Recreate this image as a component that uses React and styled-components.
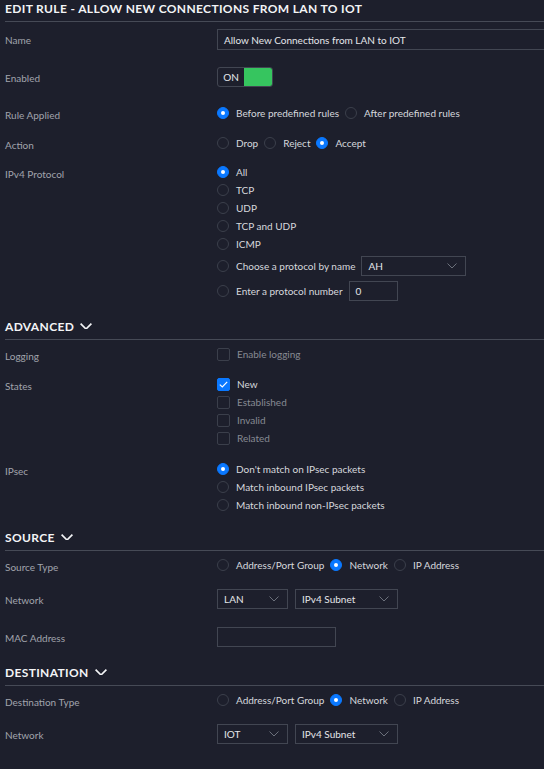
import React from 'react';
import styled, { createGlobalStyle } from 'styled-components';

const GlobalStyle = createGlobalStyle`
  html, body {
    margin: 0;
    padding: 0;
    background: #1d1f2c;
    overflow: hidden;
  }
  body {
    font-family: Lato, 'Noto Sans', sans-serif;
    -webkit-font-smoothing: antialiased;
  }
`;

const Page = styled.div`
  width: 539px;
  padding-left: 5px;
  padding-bottom: 30px;
`;

const Heading = styled.div`
  display: flex;
  align-items: center;
  gap: 6px;
  margin-top: ${p => p.$top || 0}px;
  height: 16px;
  padding-bottom: 5px;
  border-bottom: 1px solid #464a56;
  color: #f3f4f6;
  font-size: 12px;
  font-weight: 700;
  letter-spacing: 0.35px;
  text-transform: uppercase;
  white-space: nowrap;
`;

const Row = styled.div`
  display: grid;
  grid-template-columns: 212px 1fr;
  align-items: start;
  margin-top: ${p => p.$top || 0}px;
`;

const Label = styled.div`
  padding-top: 2px;
  margin-bottom: -2px;
  line-height: 18px;
  font-size: 10px;
  color: #a1a4ac;
  white-space: nowrap;
`;

const Controls = styled.div`
  display: flex;
  flex-direction: column;
`;

const Inline = styled.div`
  display: flex;
  align-items: center;
  gap: ${p => p.$gap || 6}px;
  height: ${p => p.$h || 18}px;
  margin-top: ${p => p.$top || 0}px;
  white-space: nowrap;
`;

const Option = styled.label`
  display: flex;
  align-items: center;
  gap: 7px;
  height: 18px;
  font-size: 10px;
  color: ${p => (p.$muted ? '#868a93' : '#d6d8dd')};
  white-space: nowrap;
`;

const RadioDot = styled.span`
  box-sizing: border-box;
  width: 12px;
  height: 12px;
  border-radius: 50%;
  flex: none;
  border: 1px solid ${p => (p.$on ? '#0a78ff' : '#3b3f4b')};
  background: ${p => (p.$on ? '#0a78ff' : 'transparent')};
  display: flex;
  align-items: center;
  justify-content: center;
  &::after {
    content: '';
    width: 4px;
    height: 4px;
    border-radius: 50%;
    background: #fff;
    display: ${p => (p.$on ? 'block' : 'none')};
  }
`;

const Box = styled.span`
  box-sizing: border-box;
  width: 13px;
  height: 13px;
  border-radius: 2px;
  flex: none;
  border: 1px solid ${p => (p.$on ? '#0a78ff' : '#3b3f4b')};
  background: ${p => (p.$on ? '#0a78ff' : 'transparent')};
  display: flex;
  align-items: center;
  justify-content: center;
`;

const TextBox = styled.div`
  box-sizing: border-box;
  width: ${p => p.$w}px;
  height: ${p => p.$h || 20}px;
  border: 1px solid #424652;
  padding-left: 6px;
  display: flex;
  align-items: center;
  font-size: 10px;
  color: #e4e6ea;
  flex: none;
`;

const SelectBox = styled(TextBox)`
  justify-content: space-between;
  padding-right: 8px;
`;

const Toggle = styled.div`
  box-sizing: border-box;
  display: flex;
  width: 56px;
  height: 20px;
  border: 1px solid #424652;
  border-radius: 3px;
  overflow: hidden;
`;

const ToggleText = styled.span`
  width: 26px;
  display: flex;
  align-items: center;
  justify-content: center;
  font-size: 10px;
  color: #e4e6ea;
`;

const ToggleKnob = styled.span`
  flex: 1;
  background: #36c55f;
`;

const Chevron = ({ size = 10, color = '#6b707b', width = 1 }) => (
  <svg width={size} height={size * 0.55} viewBox="0 0 10 5.5" fill="none">
    <path d="M0.5 0.5 L5 5 L9.5 0.5" stroke={color} strokeWidth={width} />
  </svg>
);

const Check = () => (
  <svg width="9" height="7" viewBox="0 0 9 7" fill="none">
    <path d="M0.8 3.6 L3.3 6 L8.2 0.8" stroke="#fff" strokeWidth="1.2" />
  </svg>
);

const Radio = ({ on, children, muted }) => (
  <Option $muted={muted}>
    <RadioDot $on={on} />
    {children}
  </Option>
);

const CheckBox = ({ on, children }) => (
  <Option $muted={!on}>
    <Box $on={on}>{on && <Check />}</Box>
    {children}
  </Option>
);

const Select = ({ w, value }) => (
  <SelectBox $w={w}>
    <span>{value}</span>
    <Chevron />
  </SelectBox>
);

const Section = ({ title, top }) => (
  <Heading $top={top}>
    {title}
    <Chevron size={12} color="#f3f4f6" width={1.4} />
  </Heading>
);

const TypeChoice = () => (
  <Inline>
    <Radio>Address/Port Group</Radio>
    <Radio on>Network</Radio>
    <Radio>IP Address</Radio>
  </Inline>
);

export default function App() {
  return (
    <>
      <GlobalStyle />
      <Page>
        <Heading>Edit Rule - Allow New Connections from LAN to IOT</Heading>

        <Row $top={7}>
          <Label>Name</Label>
          <TextBox $w={340} $h={21}>Allow New Connections from LAN to IOT</TextBox>
        </Row>

        <Row $top={17}>
          <Label>Enabled</Label>
          <Toggle>
            <ToggleText>ON</ToggleText>
            <ToggleKnob />
          </Toggle>
        </Row>

        <Row $top={17}>
          <Label>Rule Applied</Label>
          <Inline>
            <Radio on>Before predefined rules</Radio>
            <Radio>After predefined rules</Radio>
          </Inline>
        </Row>

        <Row $top={12}>
          <Label>Action</Label>
          <Inline>
            <Radio>Drop</Radio>
            <Radio>Reject</Radio>
            <Radio on>Accept</Radio>
          </Inline>
        </Row>

        <Row $top={11}>
          <Label>IPv4 Protocol</Label>
          <Controls>
            <Radio on>All</Radio>
            <Radio>TCP</Radio>
            <Radio>UDP</Radio>
            <Radio>TCP and UDP</Radio>
            <Radio>ICMP</Radio>
            <Inline $h={22} $top={2}>
              <Radio>Choose a protocol by name</Radio>
              <Select w={105} value="AH" />
            </Inline>
            <Inline $h={22} $top={3}>
              <Radio>Enter a protocol number</Radio>
              <TextBox $w={49}>0</TextBox>
            </Inline>
          </Controls>
        </Row>

        <Section title="Advanced" top={16} />

        <Row $top={5}>
          <Label>Logging</Label>
          <CheckBox>Enable logging</CheckBox>
        </Row>

        <Row $top={12}>
          <Label>States</Label>
          <Controls>
            <CheckBox on>New</CheckBox>
            <CheckBox>Established</CheckBox>
            <CheckBox>Invalid</CheckBox>
            <CheckBox>Related</CheckBox>
          </Controls>
        </Row>

        <Row $top={13}>
          <Label>IPsec</Label>
          <Controls>
            <Radio on>Don't match on IPsec packets</Radio>
            <Radio>Match inbound IPsec packets</Radio>
            <Radio>Match inbound non-IPsec packets</Radio>
          </Controls>
        </Row>

        <Section title="Source" top={15} />

        <Row $top={5}>
          <Label>Source Type</Label>
          <TypeChoice />
        </Row>

        <Row $top={15}>
          <Label>Network</Label>
          <Inline $h={20} $gap={7}>
            <Select w={71} value="LAN" />
            <Select w={103} value="IPv4 Subnet" />
          </Inline>
        </Row>

        <Row $top={18}>
          <Label>MAC Address</Label>
          <TextBox $w={119} />
        </Row>

        <Section title="Destination" top={17} />

        <Row $top={5}>
          <Label>Destination Type</Label>
          <TypeChoice />
        </Row>

        <Row $top={15}>
          <Label>Network</Label>
          <Inline $h={20} $gap={7}>
            <Select w={71} value="IOT" />
            <Select w={103} value="IPv4 Subnet" />
          </Inline>
        </Row>
      </Page>
    </>
  );
}
